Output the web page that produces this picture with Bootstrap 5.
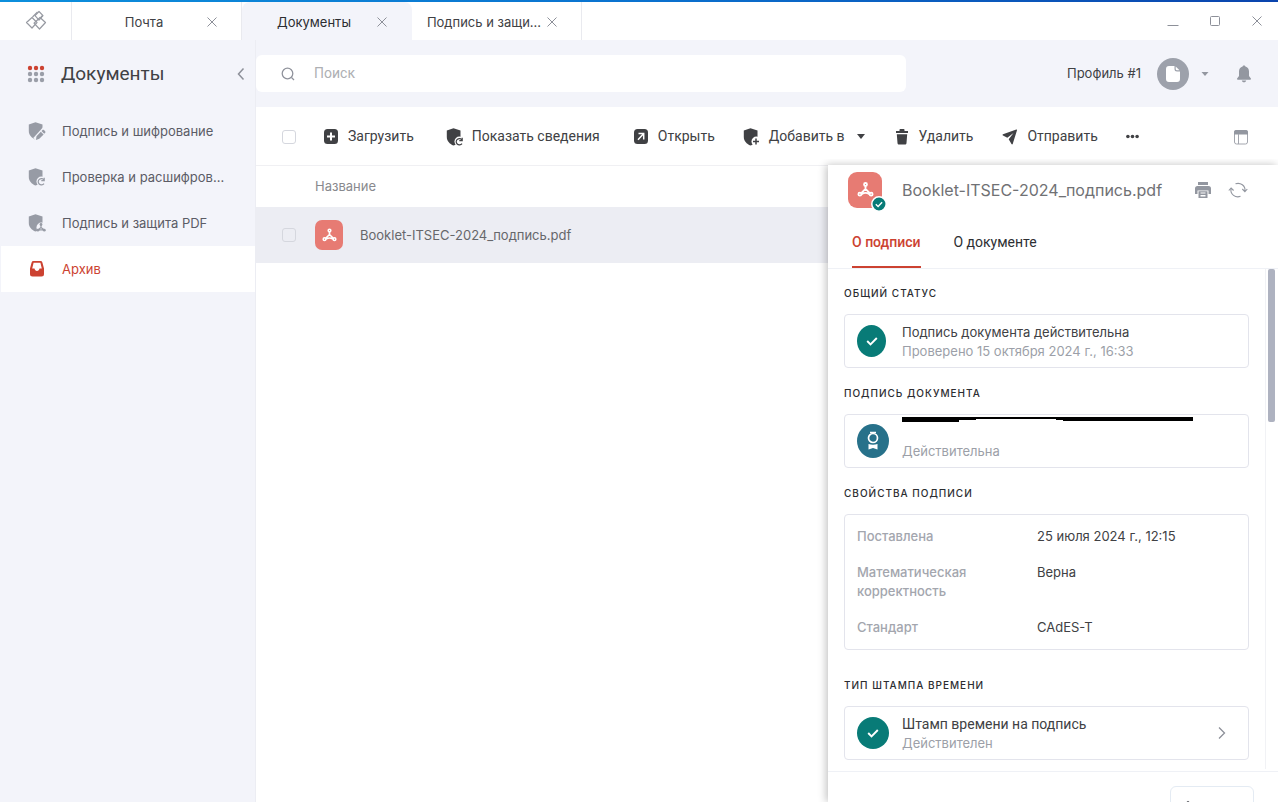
<!DOCTYPE html>
<html lang="ru">
<head>
<meta charset="utf-8">
<meta name="viewport" content="width=device-width, initial-scale=1">
<title>Документы</title>
<link href="https://cdn.jsdelivr.net/npm/bootstrap@5.3.0/dist/css/bootstrap.min.css" rel="stylesheet">
<style>
  :root { --bg: #f3f4fa; --line: #e9eaef; --card-line: #e3e4ec; --ink: #404144; --muted: #9c9fa8; --accent: #cc4231; --ok: #087b77; }
  body { font: 13px/19px Inter, "Liberation Sans", sans-serif; color: var(--ink); background: var(--bg); }
  button { font: inherit; color: inherit; background: none; border: 0; padding: 0; }
  svg { display: block; flex: none; }
  .robo { font-family: Roboto, "Liberation Sans", sans-serif; font-size: 14px; }
  .muted { color: var(--muted); }

  .topline { height: 2px; background: linear-gradient(90deg, #0c8fdc, #0a72cf 50%, #0a44ad); }
  .titlebar { height: 38px; }
  .logo-cell { width: 72px; border-right: 1px solid var(--line); }
  .doc-tab { width: 170px; padding: 2px 21px 0 14px; gap: 2px; border-right: 1px solid var(--line); }
  .doc-tab.active { background: var(--bg); border-color: var(--bg); border-radius: 8px 8px 0 0; color: #2c2d31; }
  .doc-tab a { color: inherit; }
  .window-buttons { gap: 26px; padding-right: 13px; }

  .sidebar { width: 256px; border-right: 1px solid #ecedf3; }
  .sidebar-head { height: 67px; padding: 0 7px 0 27px; }
  .sidebar-title { font: 19px/26px Roboto, sans-serif; }
  .side-link { height: 46px; padding: 0 20px 0 27px; margin-left: 1px; gap: 16px; color: #5b5c66; }
  .side-link.active { background: #fff; color: var(--accent); }
  .side-nav { padding-top: 1px; }

  .header { height: 67px; padding-right: 27px; }
  .search { flex: 0 1 650px; height: 37px; padding: 0 24px; gap: 18px; border-radius: 6px; }
  .search input { border: 0; outline: 0; color: var(--ink); }
  .search input::placeholder { color: #aeafb3; opacity: 1; }
  .avatar { width: 32px; height: 32px; background: #9da1ab; }

  .toolbar { height: 59px; padding: 1px 29px 0 26px; border-bottom: 1px solid #f0f0f3; }
  .tool { gap: 8px; }
  .tools { gap: 28px; margin-left: 26px; }
  .form-check-input { width: 14px; height: 14px; margin: 0; border-color: #d5d7de; background-color: transparent; }
  .form-check-input[type=checkbox] { border-radius: 3px; }
  .list-area { min-height: 0; }
  .files th { height: 41px; font-weight: 400; color: #88898e; }
  .files td { height: 56px; background: #ecedf3; color: #66676b; }
  .files .pick { width: 58px; padding-left: 26px; }
  .pdf { background: #e77b73; border-radius: 7px; width: 28px; height: 30px; }
  .pdf-large { width: 34px; height: 36px; border-radius: 9px; }
  .file-cell { gap: 17px; }
  .check-badge { position: absolute; right: -5px; bottom: -4px; }

  .details { width: 450px; margin-top: -1px; box-shadow: -2px 0 8px rgba(0, 0, 0, .24); clip-path: inset(-6px 0 0 -12px); }
  .details-head { height: 49px; padding: 0 30px 0 20px; }
  .details-title { font-size: 16px; line-height: 24px; color: #707174; margin-left: 20px; }
  .details-tabs { height: 55px; padding: 0 24px; gap: 33px; border-bottom: 1px solid #eff1f6; }
  .details-tabs button { border-bottom: 2px solid transparent; padding-top: 4px; color: #2e2f33; }
  .details-tabs .active { border-color: var(--accent); color: var(--accent); font-weight: 500; }
  .details-body { padding: 16px 16px 0; }
  .details-foot { flex: 0 0 31px; padding: 14px 24px 0; border-top: 1px solid #eff1f6; }
  .foot-button { width: 84px; height: 36px; padding: 13px 0 0 14px; border: 1px solid #e4ebf3; border-radius: 6px; }
  .rail { width: 13px; border-left: 1px solid #f1f2f5; margin-bottom: 2px; }
  .rail-thumb { width: 7px; height: 153px; margin-left: 2px; background: #aeb2c0; border-radius: 2px; }
  .caption-line { font-size: 10px; line-height: 16px; font-weight: 500; letter-spacing: 1px; margin: 0 0 13px; color: #2c2d31; }
  .info { border: 1px solid var(--card-line); border-radius: 4px; min-height: 54px; padding: 0 20px 0 12px; gap: 13px; margin-bottom: 17px; }
  .info-text { padding-top: 2px; }
  .disc { width: 32px; height: 32px; border-radius: 50%; background: var(--ok); flex: none; }
  .disc-narrow { width: 29px; margin-right: 3px; }
  .disc-cert { background: #27718a; height: 34px; }
  .masked-name { margin: 2px 0 20px; }
  .props { display: grid; grid-template-columns: 180px 1fr; gap: 17px 0; padding: 12px; margin-bottom: 27px; }
  .props dt { font-weight: 500; color: #a3a6ae; max-width: 130px; }
  .props dd { margin: 0; }
</style>
</head>
<body class="vh-100 d-flex flex-column overflow-hidden">

<svg width="0" height="0" class="position-absolute" aria-hidden="true">
  <defs>
    <mask id="cut"><rect width="18" height="18" fill="#fff"/><circle cx="13.500" cy="13.500" r="5" fill="#000"/></mask>
    <mask id="cutPen"><rect width="18" height="18" fill="#fff"/><path d="M7.500 18 17.500 7" stroke="#000" stroke-width="6"/></mask>
    <symbol id="shield" viewBox="0 0 18 18"><path d="M7.500.2 14.500 2.600V9c0 4-3 6.800-7 8.600C3.500 15.800.8 13 .8 9V2.600z" fill="currentColor"/></symbol>
    <symbol id="s-refresh" viewBox="0 0 18 18"><use href="#shield" mask="url(#cut)"/><path d="M16.200 12.200a3.200 3.200 0 1 0-.2 3.400M16.200 9.800v2.900h-2.900" fill="none" stroke="currentColor" stroke-width="1.200"/></symbol>
    <symbol id="s-plus" viewBox="0 0 18 18"><use href="#shield" mask="url(#cut)"/><path d="M13 10.500v6M10 13.500h6" stroke="currentColor" stroke-width="1.500"/></symbol>
    <symbol id="s-pen" viewBox="0 0 18 18"><use href="#shield" mask="url(#cutPen)"/><path d="m8.500 14.300 4.300-4.600 2.800 2.700-4.300 4.300L8 18zM13.500 9l1.300-1.200c.8-.6 3.200 1.800 2.600 2.600l-1.200 1.300z" fill="currentColor"/></symbol>
    <symbol id="s-pdf" viewBox="0 0 18 18"><use href="#shield" mask="url(#cut)"/><path d="M13 10.500v3l-2.800 2.300M13 13.500l3 2.300M10 15.800h6" fill="none" stroke="currentColor" stroke-width="1.200"/><circle cx="13" cy="10.500" r="1.400" fill="currentColor"/><circle cx="9.900" cy="16.200" r="1.400" fill="currentColor"/><circle cx="16.300" cy="16.200" r="1.400" fill="currentColor"/></symbol>
    <symbol id="acro" viewBox="0 0 16 14"><g fill="none" stroke="#fff" stroke-width="1.700" stroke-linecap="round"><circle cx="8" cy="2.300" r="1.400"/><path d="M8 4v2.500L4.200 10.200M8 6.500l3.800 3.700M4.700 11.200q3.300-2 6.600 0"/><circle cx="2.700" cy="11.400" r="1.400"/><circle cx="13.300" cy="11.400" r="1.400"/></g></symbol>
    <symbol id="tick" viewBox="0 0 12 10"><path d="m1.200 5 3.300 3.300L10.800 2" fill="none" stroke="#fff" stroke-width="1.900"/></symbol>
    <symbol id="cross" viewBox="0 0 16 16"><path d="m3.500 3.500 9 9M12.500 3.500l-9 9" stroke="#8d9099" stroke-width="1"/></symbol>
  </defs>
</svg>

<div class="topline flex-shrink-0"></div>
<header class="titlebar d-flex bg-white flex-shrink-0">
  <div class="logo-cell d-flex align-items-center justify-content-center">
    <svg width="22" height="22" viewBox="0 0 22 22" fill="none" stroke="#979aa2" stroke-width="1.200" stroke-linejoin="round"><path d="m7 7.500 5 5L7 18l-5.500-5.500z"/><path d="m15 7.500 5.500 5L14.500 19 9 13.200z"/><path d="m14 1.500 4 4.200-4 4.500-4-4.500z"/><path d="m7.500 7 5-5M17.500 5.500l-2.500 3"/></svg>
  </div>
  <nav class="d-flex" aria-label="Вкладки">
    <div class="doc-tab d-flex align-items-center"><a href="#" class="flex-fill text-center text-decoration-none text-nowrap">Почта</a><button type="button" aria-label="Закрыть вкладку"><svg width="16" height="16"><use href="#cross"/></svg></button></div>
    <div class="doc-tab active d-flex align-items-center"><a href="#" class="flex-fill text-center text-decoration-none text-nowrap">Документы</a><button type="button" aria-label="Закрыть вкладку"><svg width="16" height="16"><use href="#cross"/></svg></button></div>
    <div class="doc-tab d-flex align-items-center"><a href="#" class="flex-fill text-center text-decoration-none text-nowrap">Подпись и защи...</a><button type="button" aria-label="Закрыть вкладку"><svg width="16" height="16"><use href="#cross"/></svg></button></div>
  </nav>
  <div class="window-buttons d-flex align-items-center ms-auto">
    <button type="button" aria-label="Свернуть"><svg width="16" height="16"><path d="M2.500 12.500h11" stroke="#8d9099"/></svg></button>
    <button type="button" aria-label="Развернуть"><svg width="16" height="16"><rect x="3.500" y="3.500" width="9" height="9" rx="1" fill="none" stroke="#8d9099"/></svg></button>
    <button type="button" aria-label="Закрыть окно"><svg width="16" height="16"><use href="#cross"/></svg></button>
  </div>
</header>

<div class="d-flex flex-fill overflow-hidden">
  <aside class="sidebar flex-shrink-0">
    <div class="sidebar-head d-flex align-items-center">
      <button type="button" aria-label="Приложения"><svg width="18" height="18" fill="#9a9ea8"><g fill="#cc4231"><circle cx="3" cy="3" r="2.200"/><circle cx="9" cy="3" r="2.200"/><circle cx="15" cy="3" r="2.200"/></g><circle cx="3" cy="9" r="2.200"/><circle cx="9" cy="9" r="2.200"/><circle cx="15" cy="9" r="2.200"/><circle cx="3" cy="15" r="2.200"/><circle cx="9" cy="15" r="2.200"/><circle cx="15" cy="15" r="2.200"/></svg></button>
      <h1 class="sidebar-title mb-0 ms-3">Документы</h1>
      <button type="button" class="ms-auto" aria-label="Свернуть меню"><svg width="14" height="14" fill="none" stroke="#8d9099" stroke-width="1.500"><path d="M9.500 1.500 4.500 7l5 5.500"/></svg></button>
    </div>
    <nav class="nav side-nav flex-column flex-nowrap">
      <a href="#" class="side-link d-flex align-items-center text-decoration-none text-nowrap"><svg width="18" height="18" color="#979ba5"><use href="#s-pen"/></svg>Подпись и шифрование</a>
      <a href="#" class="side-link d-flex align-items-center text-decoration-none text-nowrap"><svg width="18" height="18" color="#979ba5"><use href="#s-refresh"/></svg>Проверка и расшифров...</a>
      <a href="#" class="side-link d-flex align-items-center text-decoration-none text-nowrap"><svg width="18" height="18" color="#979ba5"><use href="#s-pdf"/></svg>Подпись и защита PDF</a>
      <a href="#" class="side-link active d-flex align-items-center text-decoration-none text-nowrap" aria-current="page"><svg width="18" height="18" fill="#cc4231" fill-rule="evenodd"><path d="M5.500 1h7a2 2 0 0 1 1.900 1.400L16 8.500V14a2.500 2.500 0 0 1-2.500 2.500h-9A2.500 2.500 0 0 1 2 14V8.500l1.600-6.100A2 2 0 0 1 5.500 1zM5.600 2.800 4.200 8.500h2.300c.3 1.600 1.100 2.500 2.500 2.500s2.200-.9 2.500-2.500h2.300l-1.400-5.700z"/></svg>Архив</a>
    </nav>
  </aside>

  <main class="flex-fill d-flex flex-column overflow-hidden">
    <div class="header d-flex align-items-center flex-shrink-0">
      <label class="search bg-white d-flex align-items-center">
        <svg width="16" height="16" fill="none" stroke="#90939c" stroke-width="1.300"><circle cx="7.500" cy="7.500" r="5.300"/><path d="m11.500 11.500 2.500 2.500"/></svg>
        <input type="search" class="flex-fill robo p-0" placeholder="Поиск" aria-label="Поиск">
      </label>
      <span class="ms-auto me-3 text-nowrap">Профиль #1</span>
      <button type="button" class="d-flex align-items-center gap-2" aria-label="Меню профиля">
        <span class="avatar rounded-circle d-flex align-items-center justify-content-center"><svg width="14" height="16"><path d="M3 0h5.500v3A2.500 2.500 0 0 0 11 5.500h3V13a3 3 0 0 1-3 3H3a3 3 0 0 1-3-3V3a3 3 0 0 1 3-3zM9.700.5 13.500 4.300H11A1.300 1.300 0 0 1 9.700 3z" fill="#fff"/></svg></span>
        <svg width="16" height="16"><path d="M4.500 6h7L8 10z" fill="#9397a0"/></svg>
      </button>
      <button type="button" class="ms-4" aria-label="Уведомления"><svg width="14" height="18" viewBox="1 0 14 18" fill="#9397a0"><path d="M8 .5c.9 0 1.300.5 1.400 1.100 2.300.7 3.600 2.500 3.600 5V11l1.900 2.500c.3.600 0 1.200-.7 1.200H1.800c-.7 0-1-.6-.7-1.200L3 11V6.600c0-2.500 1.300-4.300 3.600-5C6.700 1 7.100.5 8 .5zM5.800 15.500h4.400c-.2 1.200-1 1.800-2.200 1.800s-2-.6-2.200-1.800z"/></svg></button>
    </div>

    <div class="bg-white flex-fill d-flex flex-column overflow-hidden">
      <div class="toolbar d-flex align-items-center flex-shrink-0" role="toolbar">
        <input class="form-check-input" type="checkbox" aria-label="Выбрать все">
        <div class="tools d-flex align-items-center robo text-nowrap">
          <button type="button" class="tool d-flex align-items-center me-1"><svg width="18" height="18"><rect x="2" y="1" width="14" height="15" rx="3.500" fill="#404144"/><path d="M9 4.500v8M5 8.500h8" stroke="#fff" stroke-width="2"/></svg>Загрузить</button>
          <button type="button" class="tool d-flex align-items-center me-1"><svg width="18" height="18"><use href="#s-refresh"/></svg>Показать сведения</button>
          <button type="button" class="tool d-flex align-items-center"><svg width="18" height="18"><rect x="2" y="1" width="14" height="15" rx="3.500" fill="#404144"/><path d="M6.500 5.500h5.200v6M11.500 5.700 6 11.700" fill="none" stroke="#fff" stroke-width="1.500"/></svg>Открыть</button>
          <button type="button" class="tool d-flex align-items-center"><svg width="18" height="18"><use href="#s-plus"/></svg>Добавить в<svg class="ms-1" width="8" height="6"><path d="M0 0h8L4 5z" fill="#404144"/></svg></button>
          <button type="button" class="tool d-flex align-items-center"><svg width="18" height="18" fill="#404144"><path d="M6.500 3V1.800c0-.5.300-.8.800-.8h3.400c.5 0 .8.300.8.800V3H15v2H3V3zM3.800 6.300h10.400L13.500 15c-.1 1-.7 1.500-1.600 1.500H6.100c-.9 0-1.500-.5-1.600-1.500z"/></svg>Удалить</button>
          <button type="button" class="tool d-flex align-items-center"><svg width="18" height="18" fill="#404144"><path d="M15.300 1.500 2 6.200c-.6.300-.6 1 0 1.300l4.300 2.300L12.500 5l-4.800 6.300 2.800 4.800c.3.500 1 .4 1.200-.1L16 2.300c.2-.6-.2-1-.7-.8z"/></svg>Отправить</button>
          <button type="button" aria-label="Ещё"><svg width="14" height="18" viewBox="4 0 14 18" fill="#404144"><circle cx="1.900" cy="8.500" r="1.800" transform="translate(4)"/><circle cx="10.500" cy="8.500" r="1.800"/><circle cx="15.100" cy="8.500" r="1.800"/></svg></button>
        </div>
        <button type="button" class="ms-auto" aria-label="Вид таблицы"><svg width="16" height="16"><rect x="1.500" y="1.500" width="13" height="13.500" rx="2" fill="none" stroke="#a3a6ae"/><path d="M1 5.500V3a2 2 0 0 1 2-2h10a2 2 0 0 1 2 2v2.500z" fill="#9397a0"/><path d="M5.500 5v10" stroke="#a3a6ae"/></svg></button>
      </div>

      <div class="list-area d-flex flex-fill">
        <div class="flex-fill">
          <table class="files w-100">
            <thead><tr><th class="pick"></th><th>Название</th></tr></thead>
            <tbody><tr>
              <td class="pick"><input class="form-check-input d-block" type="checkbox" aria-label="Выбрать файл"></td>
              <td><div class="file-cell d-flex align-items-center"><span class="pdf d-flex align-items-center justify-content-center"><svg width="15" height="14"><use href="#acro"/></svg></span>Booklet-ITSEC-2024_подпись.pdf</div></td>
            </tr></tbody>
          </table>
        </div>

        <section class="details bg-white flex-shrink-0 d-flex flex-column">
          <div class="details-head d-flex align-items-center flex-shrink-0">
            <span class="pdf pdf-large position-relative d-flex align-items-center justify-content-center"><svg width="17" height="15"><use href="#acro"/></svg><svg class="check-badge" width="16" height="16"><circle cx="8" cy="8" r="7.200" fill="#087b77" stroke="#fff" stroke-width="1.500"/><path d="m4.800 8.200 2.300 2.200 4-4.200" fill="none" stroke="#fff" stroke-width="1.400"/></svg></span>
            <h2 class="details-title fw-normal mb-0 text-nowrap">Booklet-ITSEC-2024_подпись.pdf</h2>
            <button type="button" class="ms-auto" aria-label="Печать"><svg width="18" height="18" fill="#9397a0"><path d="M4 1h10v3H4zM3.500 5h11A2.500 2.500 0 0 1 17 7.500V13h-2.500V9.500h-11V13H1V7.500A2.500 2.500 0 0 1 3.500 5z"/><path fill-rule="evenodd" d="M4.500 10.300h9V17h-9zM6.500 11.500v1h5v-1zM6.500 14v1.500h5V14z"/></svg></button>
            <button type="button" class="ms-3" aria-label="Обновить"><svg width="20" height="18" fill="none" stroke="#9397a0" stroke-width="1.100"><path d="M7.500 2.800a7 6.500 0 0 1 9.400 7M12.500 15.300A7 6.500 0 0 1 3 8.200M14.300 8l2.600 2.600L19.300 8M.800 9.500 3.100 7l2.500 2.500"/></svg></button>
          </div>
          <div class="details-tabs robo d-flex flex-shrink-0" role="tablist">
            <button type="button" role="tab" aria-selected="true" class="active">О подписи</button>
            <button type="button" role="tab" aria-selected="false">О документе</button>
          </div>

          <div class="d-flex flex-fill overflow-hidden">
            <div class="details-body flex-fill">
              <h3 class="caption-line">ОБЩИЙ СТАТУС</h3>
              <div class="info d-flex align-items-center">
                <span class="disc disc-narrow d-flex align-items-center justify-content-center"><svg width="12" height="10"><use href="#tick"/></svg></span>
                <div class="info-text"><div>Подпись документа действительна</div><div class="muted">Проверено 15 октября 2024 г., 16:33</div></div>
              </div>
              <h3 class="caption-line">ПОДПИСЬ ДОКУМЕНТА</h3>
              <div class="info d-flex align-items-center">
                <span class="disc disc-cert d-flex align-items-center justify-content-center"><svg width="14" height="20" fill="none" stroke="#fff" stroke-width="1.700"><path d="M4 1.500h6" stroke-width="1.500"/><circle cx="7" cy="7" r="4.500"/><path d="M2.500 13q4.500 1.600 9 0v5.500L7 17l-4.500 1.500z" fill="#fff" stroke="none"/></svg></span>
                <div class="align-self-start">
                  <svg class="masked-name" width="291" height="5" role="img" aria-label="Имя скрыто"><path d="M0 0h291v4H161V3h-7V2H74v1H57v2H0z"/></svg>
                  <div class="muted">Действительна</div>
                </div>
              </div>
              <h3 class="caption-line">СВОЙСТВА ПОДПИСИ</h3>
              <dl class="info props">
                <dt>Поставлена</dt><dd>25 июля 2024 г., 12:15</dd>
                <dt>Математическая корректность</dt><dd>Верна</dd>
                <dt>Стандарт</dt><dd>CAdES-T</dd>
              </dl>
              <h3 class="caption-line">ТИП ШТАМПА ВРЕМЕНИ</h3>
              <button type="button" class="info d-flex align-items-center w-100 text-start">
                <span class="disc d-flex align-items-center justify-content-center"><svg width="12" height="10"><use href="#tick"/></svg></span>
                <span class="info-text flex-fill"><span class="d-block robo">Штамп времени на подпись</span><span class="d-block muted">Действителен</span></span>
                <svg width="12" height="14" fill="none" stroke="#8d9099" stroke-width="1.300"><path d="m3 1.500 5.500 5.500L3 12.500"/></svg>
              </button>
            </div>
            <div class="rail flex-shrink-0"><div class="rail-thumb"></div></div>
          </div>

          <div class="details-foot d-flex justify-content-end align-items-start overflow-hidden">
            <button type="button" class="foot-button flex-shrink-0 d-flex align-items-start" aria-label="Закрыть"><svg width="8" height="8" fill="none" stroke="#77787d"><path d="M1 3Q3-.500 5 3"/></svg></button>
          </div>
        </section>
      </div>
    </div>
  </main>
</div>
<script src="https://cdn.jsdelivr.net/npm/bootstrap@5.3.0/dist/js/bootstrap.bundle.min.js"></script>
</body>
</html>
